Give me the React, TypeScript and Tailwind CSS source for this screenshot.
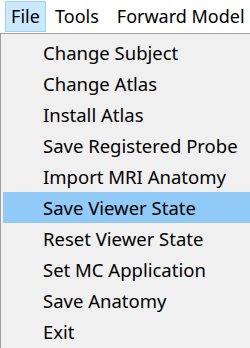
import React from 'react';

const ITEMS = [
  'Change Subject',
  'Change Atlas',
  'Install Atlas',
  'Save Registered Probe',
  'Import MRI Anatomy',
  'Save Viewer State',
  'Reset Viewer State',
  'Set MC Application',
  'Save Anatomy',
  'Exit',
];

const ACTIVE = 'Save Viewer State';

export default function App() {
  return (
    <div className="w-[250px] h-[348px] overflow-hidden bg-white font-['Noto_Sans',sans-serif] text-black">
      <div className="flex h-[33px] items-start pt-px pl-[5px] text-[18px]">
        <div className="flex h-[31px] w-[41px] shrink-0 items-center justify-center border border-[#99d1ff] bg-[#cce8ff]">File</div>
        <div className="flex h-[31px] shrink-0 items-center px-[9px]">Tools</div>
        <div className="flex h-[31px] shrink-0 items-center px-[9px] whitespace-nowrap">Forward Model</div>
      </div>
      <div className="w-[260px] h-[315px] border-t border-l border-[#a0a0a0] bg-[#f0f0f0] pt-[3px] pl-[2px]">
        {ITEMS.map(item => (
          <div
            key={item}
            className={`flex h-[31px] items-center pl-[40px] text-[18.5px] whitespace-nowrap ${item === ACTIVE ? 'bg-[#91c9f7]' : ''}`}
          >
            {item}
          </div>
        ))}
      </div>
    </div>
  );
}
